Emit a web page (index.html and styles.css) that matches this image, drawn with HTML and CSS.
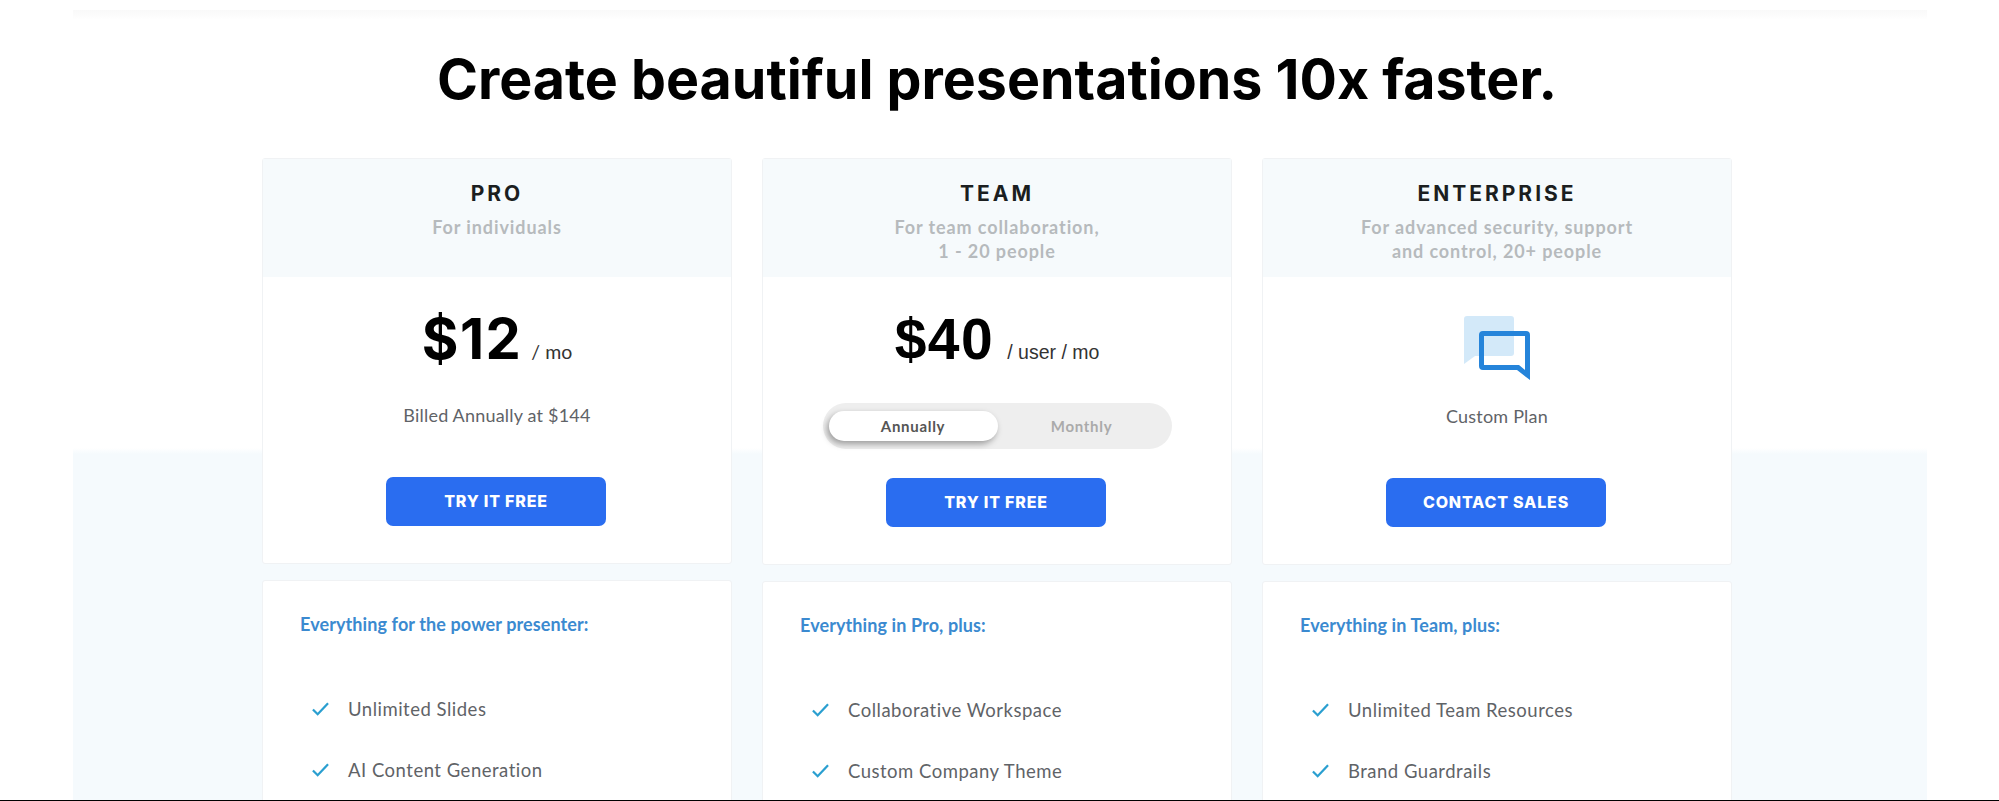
FILE: index.html
```html
<!DOCTYPE html>
<html lang="en-US">
    <head>
        <meta charset="utf-8">
        <title>Pricing</title>
        <meta name="viewport" content="width=device-width,initial-scale=1">
        <link rel="stylesheet" href="styles.css">
    </head>
    <body>
        <main class="page">
            <div class="content">
                <h1>Create beautiful presentations 10x faster.</h1>

                <div class="plans">
                    <section class="plan plan-pro">
                        <div class="plan-top">
                            <header class="plan-head">
                                <h2>PRO</h2>
                                <p>For individuals</p>
                            </header>
                            <div class="plan-price">
                                <div class="price"><strong>$12</strong><span>/ mo</span></div>
                                <p class="billed">Billed Annually at $144</p>
                            </div>
                            <a class="btn">TRY IT FREE</a>
                        </div>
                        <div class="plan-features">
                            <h3>Everything for the power presenter:</h3>
                            <ul>
                                <li><svg class="check" viewBox="0 0 18 14"><path d="M1 7.5 6 12.5 17 1"/></svg>Unlimited Slides</li>
                                <li><svg class="check" viewBox="0 0 18 14"><path d="M1 7.5 6 12.5 17 1"/></svg>AI Content Generation</li>
                            </ul>
                        </div>
                    </section>

                    <section class="plan plan-team">
                        <div class="plan-top">
                            <header class="plan-head">
                                <h2>TEAM</h2>
                                <p>For team collaboration,<br>1 - 20 people</p>
                            </header>
                            <div class="plan-price">
                                <div class="price price-arial"><strong>$40</strong><span>/ user / mo</span></div>
                                <div class="toggle">
                                    <div class="toggle-on">Annually</div>
                                    <div class="toggle-off">Monthly</div>
                                </div>
                            </div>
                            <a class="btn">TRY IT FREE</a>
                        </div>
                        <div class="plan-features">
                            <h3>Everything in Pro, plus:</h3>
                            <ul>
                                <li><svg class="check" viewBox="0 0 18 14"><path d="M1 7.5 6 12.5 17 1"/></svg>Collaborative Workspace</li>
                                <li><svg class="check" viewBox="0 0 18 14"><path d="M1 7.5 6 12.5 17 1"/></svg>Custom Company Theme</li>
                            </ul>
                        </div>
                    </section>

                    <section class="plan plan-enterprise">
                        <div class="plan-top">
                            <header class="plan-head">
                                <h2>ENTERPRISE</h2>
                                <p>For advanced security, support<br>and control, 20+ people</p>
                            </header>
                            <div class="plan-price">
                                <svg class="chat" viewBox="0 0 66 66">
                                    <path class="chat-back" d="M3 0H47a3 3 0 0 1 3 3V37a3 3 0 0 1-3 3H11L0 48V3a3 3 0 0 1 3-3z"/>
                                    <path class="chat-front" fill-rule="evenodd" d="M19 15H62a4 4 0 0 1 4 4V64L53 54H19a4 4 0 0 1-4-4V19a4 4 0 0 1 4-4zM20 20V49H55L61 54V20z"/>
                                </svg>
                                <p class="custom">Custom Plan</p>
                            </div>
                            <a class="btn">CONTACT SALES</a>
                        </div>
                        <div class="plan-features">
                            <h3>Everything in Team, plus:</h3>
                            <ul>
                                <li><svg class="check" viewBox="0 0 18 14"><path d="M1 7.5 6 12.5 17 1"/></svg>Unlimited Team Resources</li>
                                <li><svg class="check" viewBox="0 0 18 14"><path d="M1 7.5 6 12.5 17 1"/></svg>Brand Guardrails</li>
                            </ul>
                        </div>
                    </section>
                </div>
            </div>
        </main>
    </body>
</html>
```

FILE: styles.css
```css
* {
    box-sizing: border-box;
}

html, body {
    margin: 0;
    height: 801px;
    overflow: hidden;
    background-color: #fff;
}

body {
    border-bottom: 1px solid #000;
    font-family: "Lato", "Liberation Sans", sans-serif;
    color: #5f6367;
}

.page {
    width: 1854px;
    height: 790px;
    margin: 10px 0 0 73px;
    background: linear-gradient(#f9f9f9, #fff 10px, #fff 438px, #f5fafd 444px);
    overflow: hidden;
}

.content {
    width: 1470px;
    margin-left: 189px;
}

h1 {
    margin: 32px 0 42px;
    font-family: "Inter", "Liberation Sans", sans-serif;
    font-size: 55.5px;
    line-height: 74px;
    font-weight: 700;
    text-align: center;
    color: #000;
}

.plans {
    display: grid;
    grid-template-columns: repeat(3, 470px);
    column-gap: 30px;
}

.plan-top {
    height: 407px;
    border: 1px solid #f0f2f4;
    border-radius: 3px;
    background-color: #fff;
    text-align: center;
}

.plan-pro .plan-top {
    height: 406px;
}

.plan-head {
    height: 118px;
    padding-top: 22px;
    background-color: #f6fafc;
}

.plan-head h2 {
    margin: 0;
    font-family: "Inter", "Liberation Sans", sans-serif;
    font-size: 21px;
    line-height: 26px;
    font-weight: 700;
    letter-spacing: 3px;
    color: #1b1e20;
}

.plan-head p {
    margin: 8px 0 0;
    font-size: 18px;
    line-height: 24px;
    font-weight: 700;
    letter-spacing: 0.9px;
    color: #b6babd;
}

.plan-price {
    height: 201px;
    padding-top: 31px;
}

.plan-pro .plan-price {
    height: 200px;
}

.price {
    display: flex;
    justify-content: center;
    align-items: baseline;
    gap: 9px;
    color: #000;
}

.price strong {
    font-family: "Inter", "Liberation Sans", sans-serif;
    font-size: 56px;
    line-height: 62px;
    font-weight: 700;
    letter-spacing: 1.5px;
}

.price span {
    font-size: 19.5px;
    color: #333;
}

.price-arial {
    gap: 13px;
}

.price-arial strong, .price-arial span {
    font-family: "Liberation Sans", sans-serif;
}

.price-arial strong {
    font-size: 57px;
}

.billed, .custom {
    margin: 0;
    font-size: 18px;
    line-height: 24px;
    letter-spacing: 0.2px;
}

.billed {
    margin-top: 33px;
}

.toggle {
    display: flex;
    align-items: center;
    width: 349px;
    height: 46px;
    margin: 33px auto 0;
    padding: 0 6px;
    border-radius: 23px;
    background-color: #eee;
    font-size: 15px;
    font-weight: 700;
    letter-spacing: 0.7px;
}

.toggle-on {
    width: 169px;
    height: 30px;
    border-radius: 15px;
    background-color: #fff;
    box-shadow: -2px 3px 6px rgba(0, 0, 0, 0.35);
    line-height: 30px;
    color: #555;
}

.toggle-off {
    flex: 1;
    color: #aaa;
}

.chat {
    display: block;
    width: 66px;
    height: 66px;
    margin: 8px auto 0;
}

.chat-back {
    fill: #d3e9f9;
}

.chat-front {
    fill: #2584da;
}

.custom {
    margin-top: 22px;
}

.btn {
    display: block;
    width: 220px;
    height: 49px;
    margin: 0 0 0 123px;
    border-radius: 7px;
    background-color: #2a6df0;
    font-family: "Inter", "Liberation Sans", sans-serif;
    font-size: 16px;
    line-height: 49px;
    font-weight: 800;
    letter-spacing: 0.8px;
    color: #fff;
}

.plan-features {
    height: 300px;
    margin-top: 16px;
    padding: 29px 37px;
    border: 1px solid #f0f2f4;
    border-radius: 3px;
    background-color: #fff;
}

.plan-features h3 {
    margin: 0;
    font-size: 18px;
    line-height: 28px;
    font-weight: 700;
    letter-spacing: 0.1px;
    color: #3b8ad0;
}

.plan-features ul {
    margin: 40px 0 0;
    padding: 0 0 0 12px;
    list-style: none;
}

.plan-features li {
    display: flex;
    align-items: center;
    gap: 19px;
    height: 61.5px;
    font-size: 18.5px;
    letter-spacing: 0.5px;
}

.check {
    width: 17px;
    height: 14px;
    fill: none;
    stroke: #2a9fd0;
    stroke-width: 2.4;
}
```
